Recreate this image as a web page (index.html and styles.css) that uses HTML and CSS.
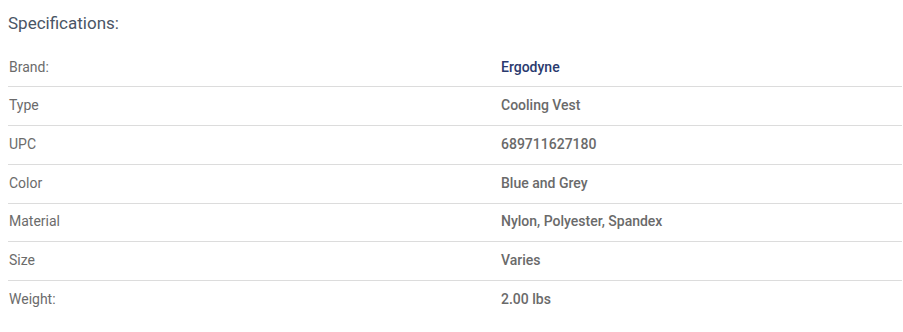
FILE: index.html
```html
<!DOCTYPE html>
<html>
<head>
<meta charset="utf-8">
<link rel="stylesheet" href="styles.css">
</head>
<body>
<section class="specs">
  <h2 class="specs-title">Specifications:</h2>
  <div class="spec-table">
    <div class="spec-row"><div class="spec-label">Brand:</div><div class="spec-value brand">Ergodyne</div></div>
    <div class="spec-row"><div class="spec-label">Type</div><div class="spec-value">Cooling Vest</div></div>
    <div class="spec-row"><div class="spec-label">UPC</div><div class="spec-value">689711627180</div></div>
    <div class="spec-row"><div class="spec-label">Color</div><div class="spec-value">Blue and Grey</div></div>
    <div class="spec-row"><div class="spec-label">Material</div><div class="spec-value">Nylon, Polyester, Spandex</div></div>
    <div class="spec-row"><div class="spec-label">Size</div><div class="spec-value">Varies</div></div>
    <div class="spec-row"><div class="spec-label">Weight:</div><div class="spec-value">2.00 lbs</div></div>
  </div>
</section>
</body>
</html>
```
FILE: styles.css
```css
html, body {
  margin: 0;
  padding: 0;
  background: #fff;
}
body {
  font-family: Roboto, "Liberation Sans", sans-serif;
}
.specs {
  padding: 0 1px 0 8px;
}
.specs-title {
  margin: 0;
  padding-top: 12px;
  height: 36px;
  box-sizing: border-box;
  font-size: 17px;
  font-weight: 400;
  line-height: 22px;
  color: #4a5565;
}
.spec-table {
  display: flex;
  flex-direction: column;
}
.spec-row {
  display: grid;
  grid-template-columns: 493px 1fr;
  height: 38.85px;
  align-items: center;
  border-top: 1px solid #dcdcdc;
  box-sizing: border-box;
  padding-bottom: 2px;
  font-size: 14px;
}
.spec-row:first-child {
  border-top: 1px solid transparent;
  height: 50px;
  padding-top: 12px;
}
.spec-label {
  padding-left: 1px;
  color: #6b6b6b;
}
.spec-value {
  color: #6a6a6a;
  font-weight: 500;
}
.spec-value.brand {
  color: #2a3a6e;
}
```
